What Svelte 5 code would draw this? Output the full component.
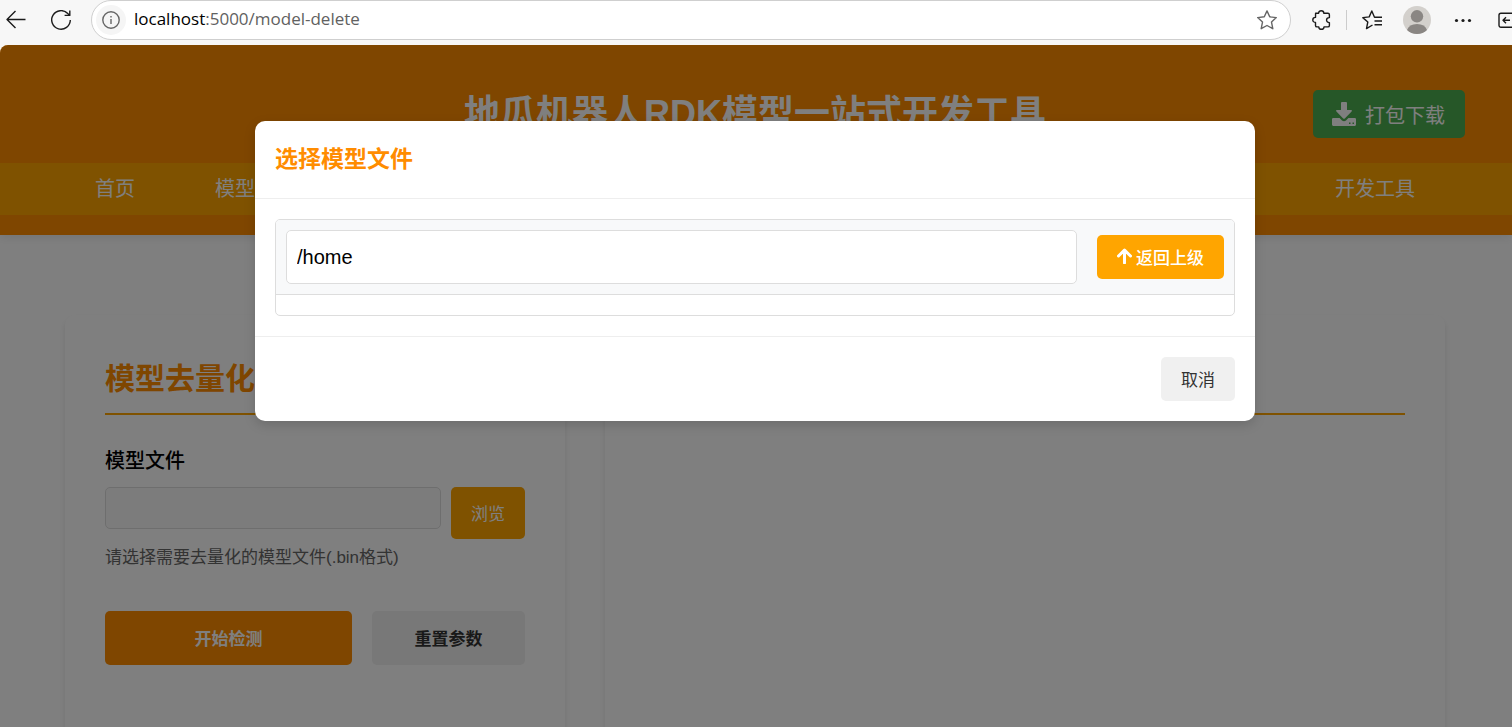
<script lang="ts">
	let modelFile = $state("");
	let currentPath = $state("/home");
	let isPickerOpen = $state(true);

	const navItems = [
		{ label: "首页", href: "#home" },
		{ label: "模型", href: "#model" },
		{ label: "开发工具", href: "#tools" }
	];

	function goUp() {
		const parts = currentPath.split("/").filter(Boolean);
		parts.pop();
		currentPath = "/" + parts.join("/");
	}

	function resetParams() {
		modelFile = "";
	}
</script>

<svelte:head>
	<title>地瓜机器人RDK模型一站式开发工具</title>
</svelte:head>

<div class="browser">
	<div class="toolbar">
		<button class="tool" aria-label="Back">
			<svg width="20" height="20" viewBox="0 0 20 20"><path d="M19.5 9.5H1M9.5 1 1 9.5 9.5 18" /></svg>
		</button>
		<button class="tool reload" aria-label="Reload">
			<svg width="20" height="20" viewBox="0 0 20 20">
				<path d="M19.3 10A9.3 9.3 0 1 1 16.8 3.6L18.5 5.2M18.8 .5V5.4H13.6" />
			</svg>
		</button>
		<div class="address">
			<button class="info" aria-label="Site information">
				<svg width="18" height="18" viewBox="0 0 18 18">
					<circle cx="9" cy="9" r="8.2" /><path d="M9 8V13M9 5V6.4" />
				</svg>
			</button>
			<span class="url">localhost<span class="path">:5000/model-delete</span></span>
			<button class="tool star" aria-label="Favorite">
				<svg width="20" height="20" viewBox="0 0 20 20">
					<path d="M10 .9 12.7 6.8 19.3 7.6 14.5 12.1 15.8 18.7 10 15.5 4.2 18.7 5.5 12.1 .7 7.6 7.3 6.8Z" />
				</svg>
			</button>
		</div>
		<button class="tool puzzle" aria-label="Extensions">
			<svg width="20" height="20" viewBox="0 0 20 20">
				<path d="M3.6 3.2H6.6C6.6 -.1 11.8 -.1 11.8 3.2H15.9Q17.4 3.2 17.4 4.7V7.6C13.6 7.6 13.6 12.6 17.4 12.6V15.4Q17.4 16.9 15.9 16.9H12C12 20.1 6.8 20.1 6.8 16.9H5Q3.5 16.9 3.5 15.4V12.4C-.1 12.4 -.1 7.4 3.5 7.4Z" />
			</svg>
		</button>
		<span class="divider"></span>
		<button class="tool" aria-label="Favorites">
			<svg width="20" height="20" viewBox="0 0 20 20">
				<path d="M10.5 15 4.5 18.6 5.8 12 .8 7.6 7.2 6.9 9.8 1 12.5 7.2H20M12.5 11H20M12.5 14.8H20" />
			</svg>
		</button>
		<button class="tool avatar" aria-label="Profile">
			<svg width="28" height="28" viewBox="0 0 28 28">
				<circle cx="14" cy="14" r="14" fill="#d3d0cc" />
				<circle cx="14" cy="10.3" r="6.2" fill="#8a8683" />
				<path d="M4 24Q6 18 14 18T24 24Q20 28 14 28T4 24Z" fill="#8a8683" />
			</svg>
		</button>
		<button class="tool" aria-label="More">
			<svg class="solid" width="20" height="20" viewBox="0 0 20 20">
				<circle cx="3.5" cy="10.5" r="1.6" /><circle cx="10" cy="10.5" r="1.6" /><circle cx="16.5" cy="10.5" r="1.6" />
			</svg>
		</button>
		<button class="tool sidebar" aria-label="Sidebar">
			<svg width="20" height="20" viewBox="0 0 20 20">
				<rect x="1" y="3.3" width="18" height="14" rx="2" /><path d="M12 10.3H5M8 7.3 5 10.3 8 13.3" />
			</svg>
		</button>
	</div>

	<div class="viewport">
		<header>
			<h1>地瓜机器人RDK模型一站式开发工具</h1>
			<button class="download">
				<svg width="24" height="24" viewBox="0 0 24 24">
					<path fill-rule="evenodd" d="M9 1Q9 0 10 0H14Q15 0 15 1V8H19.2Q20.6 8.2 19.6 9.5L12.8 16.4Q12 17.1 11.2 16.4L4.4 9.5Q3.4 8.2 4.8 8H9ZM1.2 16H7.6L10 18.4Q12 20 14 18.4L16.4 16H22.8Q24 16 24 17.2V22.6Q24 24 22.8 24H1.2Q0 24 0 22.6V17.2Q0 16 1.2 16ZM17 20.5V22H18.5V20.5ZM20.5 20.5V22H22V20.5Z" />
				</svg>
				打包下载
			</button>
			<nav>
				{#each navItems as item}
					<a href={item.href}>{item.label}</a>
				{/each}
			</nav>
		</header>

		<main>
			<section class="panel">
				<h2>模型去量化</h2>
				<label for="model-file">模型文件</label>
				<div class="file-row">
					<input id="model-file" type="text" bind:value={modelFile} readonly />
					<button class="btn orange browse" onclick={() => (isPickerOpen = true)}>浏览</button>
				</div>
				<p class="hint">请选择需要去量化的模型文件(.bin格式)</p>
				<div class="actions">
					<button class="btn start">开始检测</button>
					<button class="btn grey" onclick={resetParams}>重置参数</button>
				</div>
			</section>
			<section class="panel">
				<div class="panel-head"></div>
			</section>
		</main>

		{#if isPickerOpen}
			<div class="overlay">
				<div class="modal" role="dialog" aria-labelledby="picker-title">
					<div class="modal-header">
						<h3 id="picker-title">选择模型文件</h3>
					</div>
					<div class="modal-body">
						<div class="file-browser">
							<div class="path-bar">
								<input type="text" aria-label="当前路径" bind:value={currentPath} />
								<button class="btn orange up" onclick={goUp}>
									<svg width="15" height="16" viewBox="0 0 15 16">
										<path d="M7.5 15V2.5M1.5 8 7.5 2 13.5 8" />
									</svg>
									返回上级
								</button>
							</div>
							<div class="file-list"></div>
						</div>
					</div>
					<div class="modal-footer">
						<button class="btn grey" onclick={() => (isPickerOpen = false)}>取消</button>
					</div>
				</div>
			</div>
		{/if}
	</div>
</div>

<style>
	:global(body) {
		background: #f7f7f7;
		font-family: "Liberation Sans", "Noto Sans CJK SC", sans-serif;
	}

	* {
		box-sizing: border-box;
	}

	.browser {
		display: flex;
		flex-direction: column;
		height: 100vh;
		overflow: hidden;
	}

	button,
	input {
		font-family: inherit;
	}

	button {
		border: none;
		cursor: pointer;
	}

	h1,
	h2,
	h3,
	p {
		margin: 0;
	}

	/* Browser toolbar */
	.toolbar {
		display: flex;
		align-items: center;
		flex-shrink: 0;
		height: 45px;
		padding: 0 0 5px 6px;
		overflow: hidden;
	}

	.tool {
		display: flex;
		flex-shrink: 0;
		padding: 0;
		background: none;
	}

	.toolbar svg {
		display: block;
		flex-shrink: 0;
		fill: none;
		stroke: #1b1b1b;
		stroke-width: 1.4;
		stroke-linejoin: round;
	}

	.toolbar .solid {
		fill: #1b1b1b;
		stroke: none;
	}

	.toolbar .avatar svg {
		stroke: none;
	}

	.reload {
		margin: 0 20px 0 25px;
	}

	.address {
		display: flex;
		flex: 1;
		align-items: center;
		height: 40px;
		padding: 0 13px 0 4px;
		border: 1px solid #cfcfcf;
		border-radius: 20px;
		background: white;
	}

	.info {
		display: flex;
		align-items: center;
		justify-content: center;
		width: 30px;
		height: 30px;
		padding: 0;
		border-radius: 50%;
		background: #f5f5f5;
	}

	.toolbar .info svg,
	.toolbar .star svg {
		stroke: #666;
	}

	.url {
		flex: 1;
		margin-left: 8px;
		padding-bottom: 2px;
		font-family: "Open Sans", "Noto Sans", sans-serif;
		font-size: 17px;
		line-height: 24px;
		color: black;
	}

	.path {
		color: #616161;
	}

	.puzzle {
		margin: 0 14px 0 21px;
	}

	.divider {
		width: 1px;
		height: 20px;
		margin-right: 15px;
		background: #ccc;
	}

	.avatar {
		margin: 0 22px 0 21px;
	}

	.sidebar {
		width: 14px;
		margin-left: 25px;
	}

	/* Page */
	.viewport {
		position: relative;
		flex: 1;
		overflow: hidden;
		border-radius: 8px 0 0 0;
		background: white;
	}

	header {
		position: relative;
		padding: 40px 0 20px;
		background: #ff8c00;
		color: white;
		box-shadow: 0 2px 10px rgba(0, 0, 0, 0.1);
	}

	h1 {
		padding-right: 2px;
		margin-bottom: 20px;
		font-size: 36px;
		line-height: 58px;
		text-align: center;
	}

	.download {
		position: absolute;
		top: 45px;
		right: 47px;
		display: flex;
		align-items: center;
		gap: 9px;
		height: 48px;
		padding: 0 20px 0 19px;
		border-radius: 5px;
		background: #4caf50;
		color: white;
		font-size: 20px;
	}

	.download svg {
		fill: white;
	}

	nav {
		display: flex;
		gap: 20px;
		padding: 0 67px 0 65px;
		background: #ffa500;
	}

	nav a {
		padding: 0 30px;
		color: white;
		font-size: 20px;
		line-height: 52px;
		text-decoration: none;
	}

	nav a:last-child {
		margin-left: auto;
	}

	main {
		display: grid;
		grid-template-columns: 500px 1fr;
		gap: 40px;
		height: 600px;
		margin: 80px 67px 0 65px;
	}

	.panel {
		padding: 40px;
		border-radius: 10px;
		background: white;
		box-shadow: 0 4px 6px rgba(0, 0, 0, 0.1);
	}

	h2,
	.panel-head {
		height: 60px;
		margin-bottom: 30px;
		border-bottom: 2px solid #ffa500;
	}

	h2 {
		color: #ff8c00;
		font-size: 30px;
		line-height: 48px;
	}

	label {
		display: block;
		margin-bottom: 10px;
		color: black;
		font-size: 20px;
		font-weight: 500;
		line-height: 32px;
	}

	.file-row {
		display: flex;
		align-items: flex-start;
		gap: 10px;
	}

	input {
		flex: 1;
		min-width: 0;
		padding: 0 10px;
		border: 1px solid #ddd;
		border-radius: 5px;
		background: white;
		color: black;
		font-size: 20px;
	}

	.file-row input {
		height: 42px;
		background: #f9f9f9;
	}

	.btn {
		height: 44px;
		padding: 0 20px 2px;
		border-radius: 5px;
		font-size: 17px;
	}

	.orange {
		background: #ffa500;
		color: white;
	}

	.grey {
		background: #f0f0f0;
		color: #333;
	}

	.browse {
		height: 52px;
	}

	.hint {
		margin-top: 5px;
		color: #666;
		font-size: 17px;
		line-height: 28px;
	}

	.actions {
		display: flex;
		gap: 20px;
		margin-top: 39px;
	}

	.actions .btn {
		flex: 1;
		height: 54px;
		font-weight: bold;
	}

	.actions .start {
		flex: 0 0 247px;
		background: #ff8c00;
		color: white;
	}

	/* File picker */
	.overlay {
		position: absolute;
		inset: 0;
		display: flex;
		align-items: flex-start;
		justify-content: center;
		padding: 76px 2px 0 0;
		background: rgba(0, 0, 0, 0.5);
	}

	.modal {
		width: 1000px;
		border-radius: 10px;
		background: white;
		box-shadow: 0 4px 12px rgba(0, 0, 0, 0.15);
	}

	.modal-header {
		padding: 20px;
		border-bottom: 1px solid #eee;
	}

	h3 {
		color: #ff8c00;
		font-size: 23px;
		line-height: 37px;
	}

	.modal-body {
		padding: 20px;
	}

	.file-browser {
		overflow: hidden;
		border: 1px solid #ddd;
		border-radius: 5px;
	}

	.path-bar {
		display: flex;
		align-items: center;
		gap: 20px;
		padding: 10px;
		border-bottom: 1px solid #ddd;
		background: #f8f9fa;
	}

	.path-bar input {
		height: 54px;
	}

	.up {
		display: flex;
		align-items: center;
		gap: 4px;
		font-weight: 500;
	}

	.up svg {
		fill: none;
		stroke: white;
		stroke-width: 3;
		stroke-linecap: round;
		stroke-linejoin: round;
	}

	.file-list {
		height: 20px;
	}

	.modal-footer {
		display: flex;
		justify-content: flex-end;
		padding: 20px;
		border-top: 1px solid #eee;
	}
</style>
